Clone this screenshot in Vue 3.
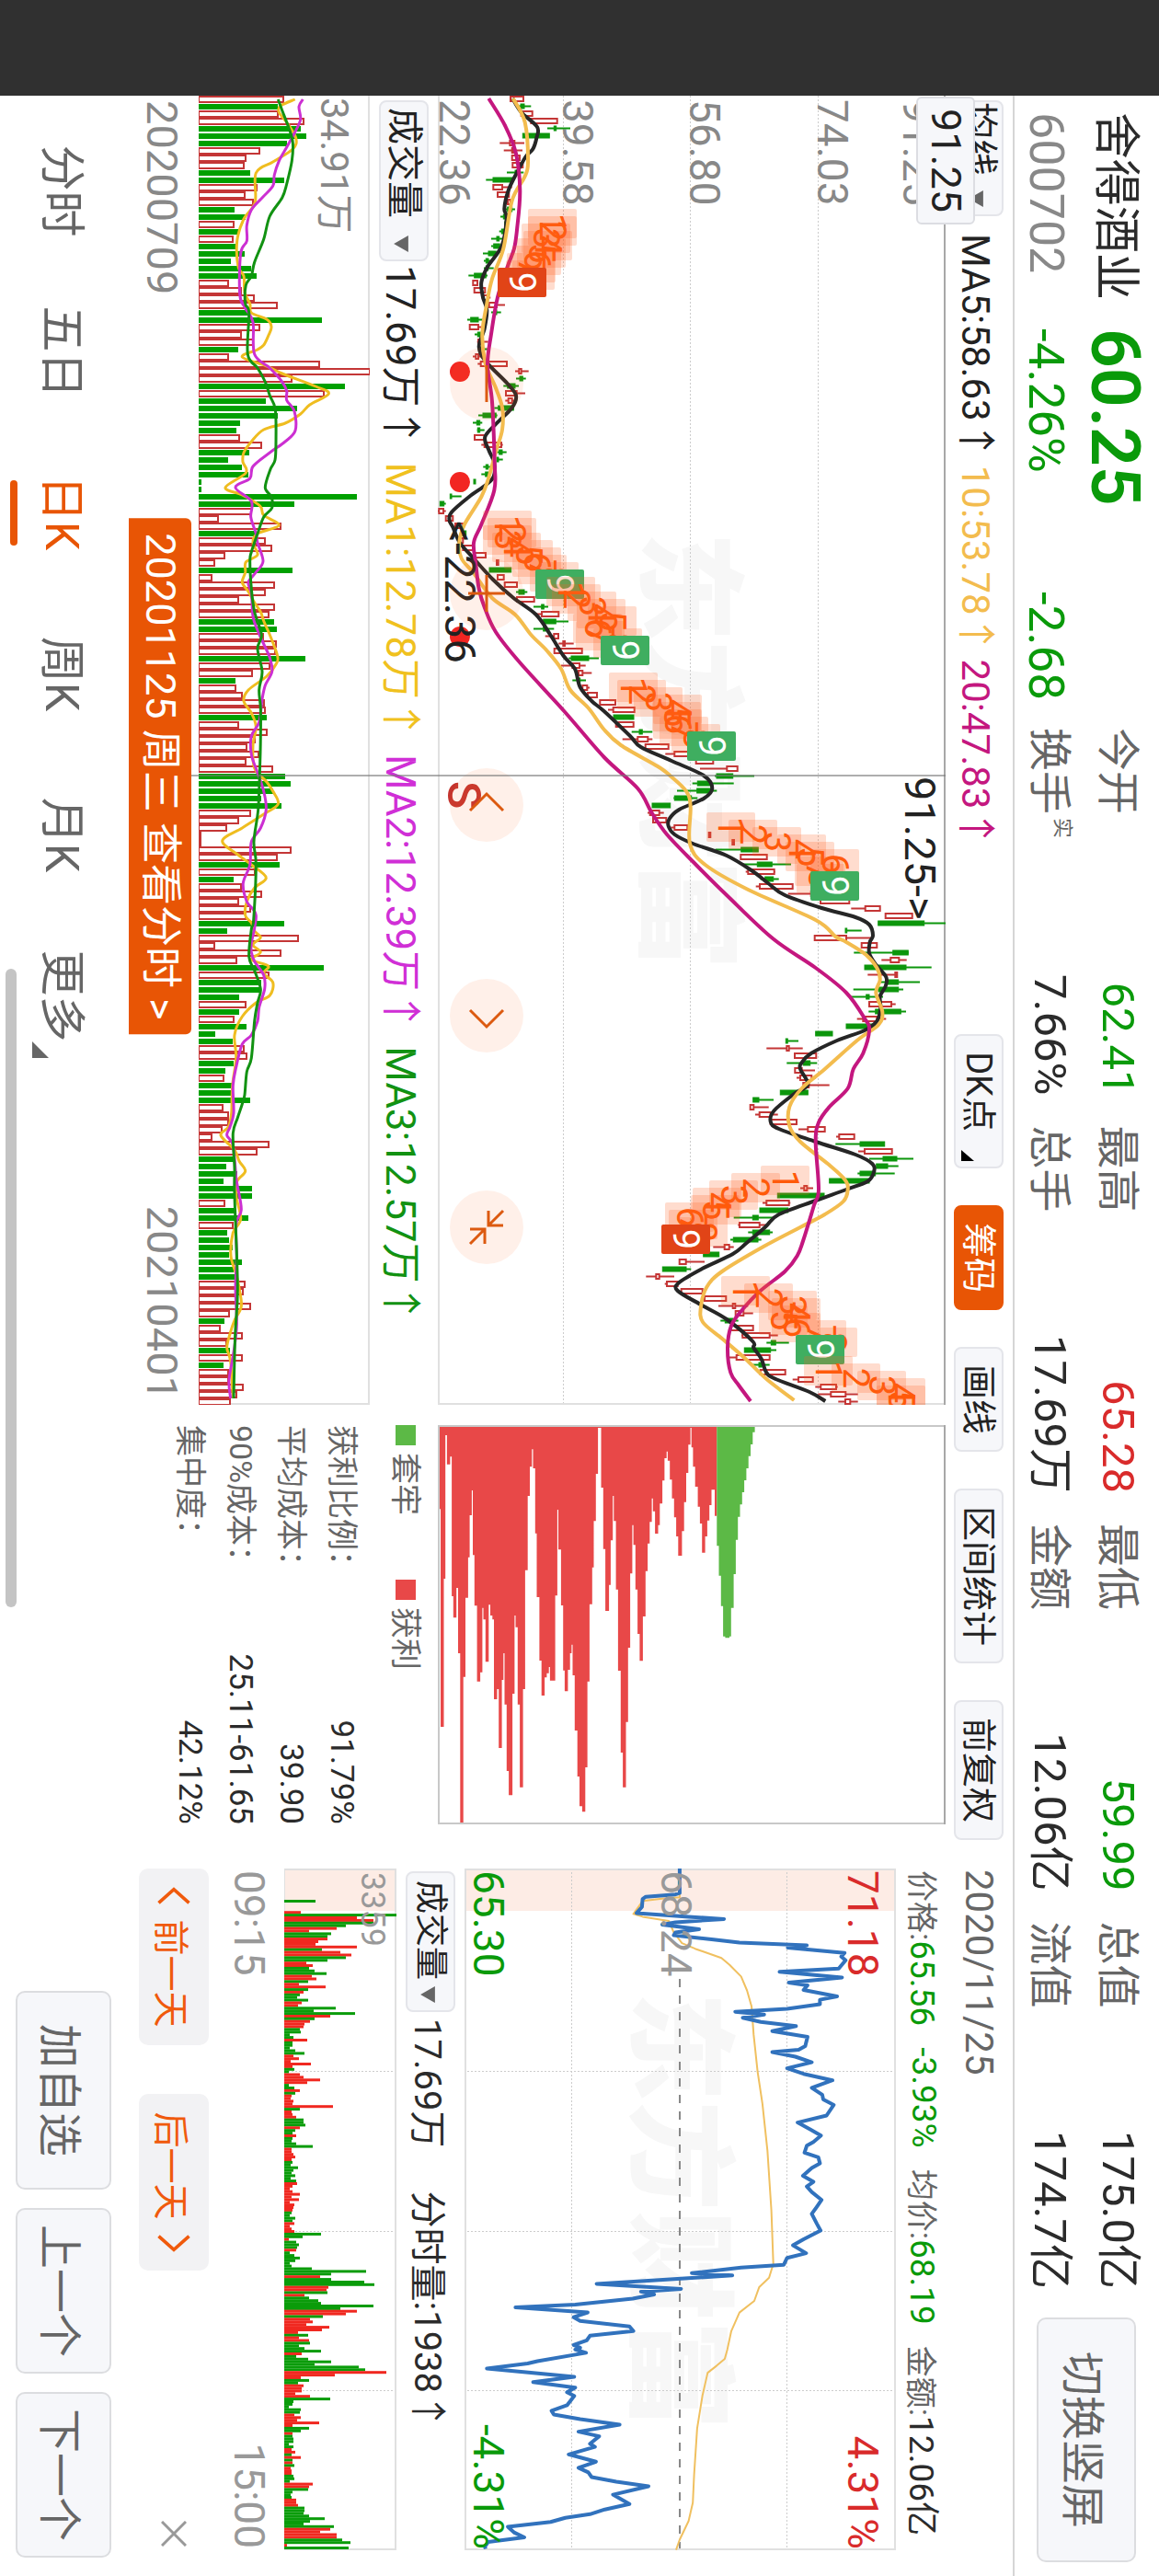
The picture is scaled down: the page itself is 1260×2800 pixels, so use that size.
<template>
  <div class="viewport">
    <div class="screen">
      <div class="notch"></div>
      <div class="app">
        <header class="quote">
          <div class="quote-main">
            <h1 class="name">舍得酒业</h1>
            <strong class="price down">60.25</strong>
            <span class="code">600702</span>
            <span class="change down">-4.26%</span>
            <span class="change down">-2.68</span>
          </div>
          <dl class="quote-stats">
            <div v-for="item in stats" :key="item.label" class="stat">
              <dt>{{ item.label }}<sup v-if="item.sup">{{ item.sup }}</sup></dt>
              <dd :class="item.tone">{{ item.value }}</dd>
            </div>
          </dl>
          <button class="switch-btn" type="button">切换竖屏</button>
        </header>

        <div class="toolbar">
          <div class="pick">
            <select class="ma-select" aria-label="均线">
              <option>均线</option>
            </select>
            <svg class="caret" viewBox="0 0 16 14"><path d="M0 0H16L8 14Z" /></svg>
          </div>
          <p class="ma-values">
            <span class="c-ink">MA5:58.63↑</span>
            <span class="c-amber">10:53.78↑</span>
            <span class="c-magenta">20:47.83↑</span>
          </p>
          <div class="tools">
            <button class="tool tool-dk" type="button">
              DK点
              <svg class="corner" viewBox="0 0 12 14"><path d="M12 0V14H0Z" /></svg>
            </button>
            <button
              v-for="tool in tools"
              :key="tool"
              type="button"
              class="tool"
              :class="{ 'tool-on': tool === activeTool }"
              @click="activeTool = tool"
            >{{ tool }}</button>
          </div>
          <span class="toolbar-date">2020/11/25</span>
        </div>

        <main class="body">
          <!-- 日K -->
          <section class="col-kline">
            <div class="chart-wrap">
              <svg class="chart" viewBox="0 0 1423 552">
                <text class="watermark" x="474" y="322">东方财富</text>
                <g class="grid-dots">
                  <path d="M0 138.5H1423M0 277.5H1423M0 415.5H1423" />
                </g>
                <path class="frame" d="M0 551H1422V0" />
                <path class="frame-top" d="M0 1H1423" />
                <text
                  v-for="axis in priceAxis"
                  :key="axis.text"
                  class="axis-text"
                  x="4"
                  :y="axis.y"
                >{{ axis.text }}</text>
                <g v-for="(c, i) in candles" :key="i" :class="c.up ? 'k-up' : 'k-down'">
                  <path :d="`M${c.x} ${c.high}V${c.top}M${c.x} ${c.bottom}V${c.low}`" />
                  <rect :x="c.x - 2.5" :y="c.top" width="5" :height="c.bottom - c.top" />
                </g>
                <path class="line ink" :d="curve(ma5)" />
                <path class="line amber" :d="curve(ma10)" />
                <path class="line magenta" :d="curve(ma20)" />
                <g v-for="(b, i) in badges" :key="'b' + i">
                  <rect
                    :class="b.kind"
                    :x="b.x - 16"
                    :y="b.y - 26"
                    width="32"
                    height="53"
                    rx="2"
                  />
                  <text
                    class="badge-num"
                    :class="{ 'badge-nine': b.n === 9 }"
                    :x="b.x"
                    :y="b.y + 14"
                  >{{ b.n }}</text>
                </g>
                <circle v-for="x in eventDots" :key="x" class="dot" :cx="x" cy="528" r="11" />
                <text class="mark-text" x="740" y="44">91.25-&gt;</text>
                <text class="mark-text" x="462" y="544">&lt;-22.36</text>
                <text class="sell" x="745" y="541">S</text>
              </svg>
              <button
                v-for="ctl in controls"
                :key="ctl.name"
                type="button"
                class="round"
                :aria-label="ctl.name"
                :style="{ left: ctl.left }"
              >
                <svg viewBox="0 0 80 80"><path :d="ctl.d" /></svg>
              </button>
            </div>

            <div class="sub-head">
              <div class="pick">
                <select class="vol-select" aria-label="日K指标">
                  <option>成交量</option>
                </select>
                <svg class="caret" viewBox="0 0 16 14"><path d="M0 0H16L8 14Z" /></svg>
              </div>
              <p class="vol-values">
                <span class="c-ink">17.69万↑</span>
                <span class="c-gold">MA1:12.78万↑</span>
                <span class="c-violet">MA2:12.39万↑</span>
                <span class="c-green">MA3:12.57万↑</span>
              </p>
            </div>

            <svg class="chart" viewBox="0 0 1423 186">
              <path class="frame" d="M0 1H1422V186" />
              <g v-for="(b, i) in volumes" :key="i" :class="b.up ? 'v-up' : 'v-down'">
                <rect :x="b.x - 3" :y="186 - b.h" width="6" :height="b.h" />
              </g>
              <text class="vol-axis" x="2" y="53">34.91万</text>
              <path class="line gold" :d="curve(volMa1, volScale)" />
              <path class="line violet" :d="curve(volMa2, volScale)" />
              <path class="line green" :d="curve(volMa3, volScale)" />
            </svg>

            <div class="dates">
              <span>20200709</span>
              <a class="date-tag" href="#">20201125 周三 查看分时 &gt;</a>
              <span>20210401</span>
            </div>
            <div class="cross"></div>
            <div class="cross-price">91.25</div>
          </section>

          <!-- 筹码分布 -->
          <section class="col-chips">
            <svg class="chart" viewBox="0 0 434 552">
              <path :d="chipPath(chipProfit, 1131)" fill="#e84848" />
              <path :d="chipPath(chipLocked, 1203)" fill="#5cb946" />
              <path class="frame-chip" d="M1 1V551H433V1" />
              <path class="frame-top" d="M0 1H434" />
            </svg>
            <ul class="legend">
              <li><i class="sq-green"></i>套牢</li>
              <li><i class="sq-red"></i>获利</li>
            </ul>
            <dl class="costs">
              <div v-for="c in costs" :key="c.label">
                <dt>{{ c.label }}：</dt>
                <dd>{{ c.value }}</dd>
              </div>
            </dl>
          </section>

          <!-- 分时 -->
          <section class="col-minute">
            <p class="minute-head">
              <span><em>价格:</em><b class="down">65.56</b></span>
              <b class="down">-3.93%</b>
              <span><em>均价:</em><b class="down">68.19</b></span>
              <span><em>金额:</em><b>12.06亿</b></span>
            </p>
            <svg class="chart" viewBox="0 0 741 469">
              <rect width="46" height="469" fill="#fdece5" />
              <text class="watermark" x="134" y="278">东方财富</text>
              <path class="grid-dots" d="M0 118.5H741M0 352.5H741M220.5 0V469M394.5 0V469M567.5 0V469" />
              <path class="mid-dash" d="M120 235H741" />
              <rect class="frame" x="1" y="1" width="739" height="467" />
              <path class="line avg" :d="minutePath(avgLine)" />
              <path class="line blue" :d="minutePath(priceLine)" />
              <text class="axis-lg up-t" x="2" y="52">71.18</text>
              <text class="axis-lg gray-t" x="2" y="255">68.24</text>
              <text class="axis-lg down-t" x="2" y="459">65.30</text>
              <text class="axis-lg up-t end" x="740" y="52">4.31%</text>
              <text class="axis-lg down-t end" x="740" y="459">-4.31%</text>
            </svg>
            <div class="sub-head sub-head-sm">
              <div class="pick">
                <select class="vol-select-sm" aria-label="分时指标">
                  <option>成交量</option>
                </select>
                <svg class="caret" viewBox="0 0 16 14"><path d="M0 0H16L8 14Z" /></svg>
              </div>
              <span>17.69万</span>
              <span class="minute-vol">分时量:1938↑</span>
            </div>
            <svg class="chart" viewBox="0 0 741 122">
              <rect width="46" height="122" fill="#fdece5" />
              <path class="grid-dots" d="M220.5 0V122M394.5 0V122M567.5 0V122" />
              <rect class="frame" x="1" y="1" width="739" height="121" />
              <rect
                v-for="(b, i) in minuteBars"
                :key="i"
                :x="b.x"
                :y="122 - b.h"
                width="3"
                :height="b.h"
                :fill="b.up ? '#f02820' : '#0a9c0a'"
              />
              <text class="axis-sm" x="4" y="38">3359</text>
            </svg>
            <div class="times"><span>09:15</span><span>15:00</span></div>
            <div class="day-nav">
              <button class="day-btn" type="button">
                <svg viewBox="0 0 24 40"><path d="M20 2L4 20L20 38" /></svg>前一天
              </button>
              <button class="day-btn" type="button">
                后一天<svg viewBox="0 0 24 40"><path d="M4 2L20 20L4 38" /></svg>
              </button>
              <button class="close" type="button" aria-label="关闭">
                <svg viewBox="0 0 28 28"><path d="M1 1L27 27M27 1L1 27" /></svg>
              </button>
            </div>
          </section>
        </main>

        <footer class="bottom">
          <nav class="tabs">
            <button
              v-for="tab in tabs"
              :key="tab"
              type="button"
              class="tab"
              :class="{ 'tab-on': tab === activeTab }"
              @click="activeTab = tab"
            >
              {{ tab }}
              <svg v-if="tab === '更多'" class="tab-corner" viewBox="0 0 18 18"><path d="M18 0V18H0Z" /></svg>
            </button>
          </nav>
          <div class="actions">
            <button class="action action-wide" type="button">加自选</button>
            <button class="action" type="button">上一个</button>
            <button class="action" type="button">下一个</button>
          </div>
          <div class="home-bar"></div>
        </footer>
      </div>
    </div>
  </div>
</template>

<script setup>
import { ref } from 'vue'

const stats = [
  { label: '今开', value: '62.41', tone: 'down' },
  { label: '最高', value: '65.28', tone: 'up' },
  { label: '最低', value: '59.99', tone: 'down' },
  { label: '总值', value: '175.0亿' },
  { label: '换手', sup: '实', value: '7.66%' },
  { label: '总手', value: '17.69万' },
  { label: '金额', value: '12.06亿' },
  { label: '流值', value: '174.7亿' }
]

const tools = ['筹码', '画线', '区间统计', '前复权']
const activeTool = ref('筹码')

const tabs = ['分时', '五日', '日K', '周K', '月K', '更多']
const activeTab = ref('日K')

const costs = [
  { label: '获利比例', value: '91.79%' },
  { label: '平均成本', value: '39.90' },
  { label: '90%成本', value: '25.11-61.65' },
  { label: '集中度', value: '42.12%' }
]

const priceAxis = [
  { text: '91.25', y: 46 },
  { text: '74.03', y: 139 },
  { text: '56.80', y: 278 },
  { text: '39.58', y: 416 },
  { text: '22.36', y: 550 }
]

const eventDots = [300, 420, 588]

const controls = [
  { name: '缩小', x: 313, d: 'M20 40H60' },
  { name: '放大', x: 541, d: 'M20 40H60M40 20V60' },
  { name: '左移', x: 771, d: 'M46 22L28 40L46 58' },
  { name: '右移', x: 1000, d: 'M34 22L52 40L34 58' },
  { name: '退出全屏', x: 1230, d: 'M22 22L38 38M22 38H38V22M58 58L42 42M58 42H42V58' }
].map((c) => ({ ...c, left: `${((c.x - 40) / 1423) * 100}%` }))

// 价格刻度：1px = 3 个单位
const priceY = (v) => Math.round(568 * 10 - (v * 10) / 3) / 10

// 方向 实体低 实体高 [影线低 影线高]
const rawCandles = `r 285 327|g 318 330 305 352|r 320 356|r 352 437|g 427 434 405 480|g 325 412|r 283 298 250 330|r 290 296 263 324
r 290 315|r 292 325|g 300 305 273 328|g 228 290 205 290|r 229 258 229 290|r 243 280|r 276 284|g 275 290 270 300|g 262 270 252 272|g 266 272
g 256 268 248 270|g 240 248 222 260|g 230 250 222 260|g 213 238 195 245|g 205 213 198 220|g 205 212 198 230|g 167 205 148 210|r 163 177
r 167 202|r 198 210 190 220|r 215 240 205 267|g 232 240 222 254|g 155 180 144 200|r 152 180 152 195|g 178 187 168 198|r 180 190 176 212
g 185 190 180 210|r 172 180 162 195|r 188 273 178 273|r 313 320 300 344|g 315 325 303 335|g 275 300 262 312|r 270 305 268 333
r 278 290 268 300|g 245 295 232 297|g 195 238 180 242|g 175 185 162 193|g 178 185 176 200|r 168 200|r 200 255 190 260|g 248 258 240 272
g 240 246 240 260|g 205 212 196 222|g 203 212 190 222|g 165 171|g 120 130|g 88 93 88 125|g 55 68 55 74|r 52 66 45 74|r 74 97|r 105 130
g 125 140|r 120 130|r 130 165|r 165 204|r 240 245|g 216 287|r 243 263|r 266 306|g 312 330 303 340|r 306 362|g 386 394 360 408
r 387 442 365 442|g 392 433 385 474|g 392 400 360 427|r 427 441 398 441|r 457 462 442 491|r 428 518|g 483 540 475 573|r 487 510 450 530
r 507 520 498 550|g 505 512 487 531|r 520 535 520 543|r 537 567|r 577 627|r 620 689 603 689|g 621 687|r 629 686|g 705 715 680 748
r 700 733 650 748|r 725 800|r 820 870 790 870|r 890 946|r 991 1025 903 1025|g 957 1010 951 1080|g 895 935 878 1013|g 893 940 828 958
g 820 875 817 895|g 747 806|r 740 770 732 785|r 750 793|r 820 862 808 862|r 932 937|r 1009 1014|g 1037 1093 953 1093|r 1036 1121
g 1090 1138 1043 1200|r 1060 1145 1052 1148|g 1115 1142 1100 1160|r 1098 1205 1085 1205|r 1265 1300 1190 1300|r 1296 1390
r 1442 1490 1396 1490|r 1508 1595|g 1484 1634 1484 1704|g 1377 1382 1377 1430|r 1277 1380 1277 1460|r 1430 1480|g 1532 1582 1405 1584
r 1525 1552 1495 1577|g 1440 1575 1440 1658|r 1540 1546 1450 1546|g 1510 1550 1490 1620|g 1485 1550 1403 1566|g 1445 1455 1395 1500
r 1455 1527 1455 1541|g 1475 1558 1453 1575|r 1435 1480 1415 1510|g 1380 1475|g 1280 1335|g 1183 1189 1183 1224|r 1186 1193 1120 1238
r 1212 1282|g 1240 1262 1186 1285|r 1213 1235 1213 1278|r 1230 1267 1218 1280|r 1240 1258 1240 1325|g 1165 1255|g 1076 1095 1076 1143
r 1067 1078 1067 1127|r 1097 1133 1083 1157|r 1133 1218|r 1255 1310 1224 1310|r 1357 1406 1347 1406|g 1425 1505 1345 1505
r 1440 1529 1419 1529|g 1500 1545 1455 1599|g 1478 1515 1478 1550|g 1425 1475 1417 1538|g 1325 1455|r 1243 1252 1230 1272|g 1156 1308
r 1120 1193 1107 1198|g 1098 1190|g 1075 1093 1013 1140|r 1032 1097 1027 1120|g 1075 1130 1060 1140|g 1012 1092 1002 1103
r 983 998 946 1013|g 914 965|r 836 857 836 918|g 781 858 781 874|r 760 770 727 819|r 795 830 788 830|r 842 911|r 918 988
r 1010 1018 963 1060|r 1019 1045 1019 1076|g 985 1010 970 1028|r 1002 1076|r 1042 1130 1038 1157|g 1135 1150 1120 1193
g 1048 1133 1048 1152|r 1022 1130 995 1130|g 1095 1105 1072 1130|r 1100 1181|r 1224 1271 1205 1271|r 1297 1347 1279 1352
r 1330 1378 1288 1418|r 1377 1393 1354 1418`

const candles = rawCandles.split(/[|\n]/).map((row, i) => {
  const [dir, lo, hi, wl, wh] = row.split(' ')
  return {
    up: dir === 'r',
    x: 3.5 + i * 8,
    top: priceY(+hi),
    bottom: priceY(+lo),
    high: priceY(+(wh || hi)),
    low: priceY(+(wl || lo))
  }
})

const toPairs = (text) => text.trim().split(/\s+/).map((p) => p.split(',').map(Number))

const ma5 = toPairs(`107,292 122,320 138,372 150,370 162,358 170,335 187,307 207,278 227,265 237,272 267,257 290,210 307,190 323,195
337,208 357,200 377,182 393,205 417,275 430,303 443,290 460,240 475,202 490,215 503,232 518,230 527,205 540,150 557,92 566,86 573,97
590,120 607,165 630,228 650,295 668,368 690,415 713,458 727,495 747,512 762,550 773,590 800,675 812,710 827,810 843,915 857,943
868,915 880,835 890,803 898,800 907,820 917,880 930,990 947,1075 960,1125 973,1180 987,1300 997,1410 1005,1455 1017,1467
1024,1457 1036,1455 1048,1475 1062,1510 1072,1508 1083,1490 1096,1492 1110,1480 1120,1440 1131,1350 1145,1265 1155,1235
1162,1230 1179,1255 1189,1210 1207,1145 1219,1133 1227,1160 1241,1280 1255,1410 1265,1465 1274,1470 1284,1450 1293,1380
1305,1280 1320,1160 1334,1115 1351,1055 1363,1010 1379,910 1394,835 1403,830 1418,905 1434,990 1458,1075 1465,1078 1477,1103
1492,1120 1499,1150 1513,1260 1523,1312`)

const ma10 = toPairs(`107,293 133,332 177,342 193,330 218,290 270,262 303,225 330,208 363,193 395,203 420,235 443,258 467,258 490,238
520,213 540,190 570,135 590,118 607,125 623,165 650,225 668,300 690,352 707,403 727,450 750,480 770,540 793,590 810,645 833,765
843,805 860,858 877,872 917,870 940,920 967,1060 1000,1280 1018,1345 1024,1380 1038,1445 1052,1480 1065,1490 1079,1477
1100,1498 1114,1485 1131,1415 1162,1310 1183,1235 1203,1195 1224,1195 1241,1230 1265,1320 1282,1375 1293,1385 1306,1370
1320,1310 1334,1230 1355,1110 1382,975 1399,925 1420,906 1437,912 1455,975 1475,1045 1499,1120 1522,1210`)

const ma20 = toPairs(`107,214 137,268 167,303 207,316 247,307 270,297 290,275 323,243 363,222 397,210 437,225 503,233 533,232 570,190
590,165 613,172 640,182 660,200 687,237 720,315 773,460 823,590 857,700 883,745 907,795 940,890 973,990 1020,1140 1052,1280
1079,1380 1107,1440 1120,1455 1145,1435 1162,1403 1183,1385 1203,1325 1220,1290 1241,1280 1293,1290 1310,1275 1348,1240
1365,1220 1382,1180 1403,1100 1424,1040 1441,1005 1465,993 1492,1003 1506,1030 1523,1068`)

// 成交量刻度：底部 258 对应 0
const volScale = (v) => 186 - (v - 258) / 3

const rawVolumes = `r533 g517 r515 r601 g590 g610 g545 r455 r410 r405 g425 g537 r448 r408 r435 g375 g410 r373 g390 r368 g378 g407 g363
g428 g447 r355 r395 r438 r512 g420 g660 r455 r396 r435 g386 r355 r650 r815 r560 g735 r665 g477 g580 g515 g392 g382 r390 r462 g423
g355 g400 g420 g267 g267 g773 g570 r428 r322 r524 g440 r473 r495 r343 r310 g563 r300 r505 r473 r386 r503 r485 g503 g513 r467 r510
r508 g605 r488 r432 g378 r378 r400 r470 r475 g480 r388 r480 r440 r415 r452 r410 r497 g540 g558 g500 g463 g527 r425 r387 r347 r265
r265 r557 r512 g522 r440 g373 r395 r463 r388 r425 r410 g538 g352 r583 r308 r525 r380 g665 r485 g463 g463 g390 r412 g390 r373 g413
g312 g370 r405 r415 g372 g345 r338 g365 g368 g425 r335 r353 r353 r333 r300 r485 r448 g376 g349 g385 g340 g431 g431 r343 g378 g421
r368 g351 g357 g369 g358 g398 g372 g380 r408 r402 r385 r427 r356 g342 r326 r398 r349 g360 r398 g338 r355 r355 r403 r380 r360`

const volumes = rawVolumes.split(/\s+/).map((v, i) => ({
  up: v[0] === 'r',
  x: 4 + i * 8,
  h: Math.round((+v.slice(1) - 258) / 3)
}))

const volMa1 = toPairs(`108,572 115,525 122,520 133,545 150,575 162,565 176,500 188,445 220,442 238,405 262,383 290,387 300,405
318,408 330,425 340,430 347,480 355,495 365,485 375,470 380,450 388,400 398,480 406,530 420,640 428,682 440,620 450,590 460,540
467,470 480,430 492,405 502,402 514,412 530,345 538,400 550,458 560,470 571,520 580,450 590,435 603,450 611,412 622,410 633,400
643,420 655,440 665,460 675,470 690,490 713,515 722,510 735,480 750,420 762,405 775,430 790,445 810,435 835,440 850,480 860,500
874,517 885,470 900,400 914,335 930,390 940,430 954,478 965,440 980,415 995,410 1003,430 1012,440 1019,460 1027,435 1035,460
1043,430 1050,485 1058,470 1068,500 1082,490 1090,445 1105,400 1125,375 1150,380 1180,368 1210,365 1225,355 1234,330 1250,375
1262,390 1273,410 1284,383 1300,380 1325,395 1340,370 1365,363 1385,380 1400,390 1420,397 1435,375 1450,360 1465,350 1480,362
1520,370`)

const volMa2 = toPairs(`108,598 116,585 130,590 145,570 160,545 175,520 190,505 202,500 215,465 228,430 245,415 262,415 275,395
320,392 335,410 350,435 385,440 400,490 415,530 425,545 435,545 447,570 468,573 480,540 492,490 507,435 520,425 530,378 545,430
562,428 580,445 590,450 610,468 622,445 633,420 645,430 670,435 685,450 700,470 715,490 730,497 745,475 760,465 785,455 800,430
820,430 840,450 860,470 880,478 900,460 915,430 940,425 960,403 980,415 995,445 1025,430 1035,430 1045,440 1060,470 1075,473
1095,455 1110,450 1125,430 1135,400 1160,380 1180,370 1210,372 1225,360 1234,350 1245,370 1280,380 1290,385 1315,397 1330,380
1365,382 1400,378 1440,382 1470,372 1500,357 1520,362`)

const volMa3 = toPairs(`108,517 120,530 140,553 155,565 175,562 200,545 215,530 235,490 260,470 285,440 300,430 310,412 330,410
340,422 385,418 400,450 415,475 430,490 445,508 480,510 500,507 510,492 530,475 540,495 552,497 562,470 580,450 600,430 610,425
640,430 665,440 690,463 705,450 730,465 750,455 770,460 800,460 840,457 880,452 915,438 940,445 1000,437 1010,430 1040,422
1055,440 1075,460 1090,450 1110,440 1150,430 1165,415 1190,408 1200,400 1215,385 1232,370 1270,375 1300,375 1400,385 1450,377
1520,372`)

// Catmull-Rom 转贝塞尔
const curve = (points, scale = priceY) => {
  const p = points.map(([x, v]) => [x - 104, scale(v)])
  let d = `M${p[0][0]} ${p[0][1].toFixed(1)}`
  for (let i = 0; i < p.length - 1; i++) {
    const a = p[i - 1] || p[i]
    const b = p[i]
    const c = p[i + 1]
    const e = p[i + 2] || c
    const c1 = [b[0] + (c[0] - a[0]) / 6, b[1] + (c[1] - a[1]) / 6]
    const c2 = [c[0] - (e[0] - b[0]) / 6, c[1] - (e[1] - b[1]) / 6]
    d += `C${[...c1, ...c2, ...c].map((n) => n.toFixed(1)).join(' ')}`
  }
  return d
}

// 九转序列
const nineTurns = [
  { x: 139, kind: 'nine-up', ys: [427, 427, 434, 432, 439, 444, 450, 451, 460] },
  { x: 467, kind: 'nine-down', ys: [476, 471, 476, 466, 453, 444, 438, 425, 419] },
  { x: 539, kind: 'nine-down', ys: [407, 401, 384, 374, 362, 378, 375, 356, 348] },
  { x: 643, kind: 'nine-down', ys: [339, 330, 312, 291, 292, 291, 284, 271, 254] },
  { x: 795, kind: 'nine-down', ys: [233, 209, 183, 156, 147, 120, 137, 135, 120] },
  { x: 1179, kind: 'nine-up', ys: [174, 206, 230, 248, 250, 278, 274, 263, 282] },
  { x: 1299, kind: 'nine-down', ys: [217, 192, 166, 162, 176, 162, 134, 122, 136] },
  { x: 1386, kind: '', ys: [127, 97, 69, 48, 48] }
]

const badges = nineTurns.flatMap((s) =>
  s.ys.map((y, i) => ({ x: s.x + i * 8, y, n: i + 1, kind: i === 8 ? s.kind : 'turn' }))
)

const chipProfit = toPairs(`602,192 605,358 608,1068 614,585 617,117 620,212 626,187 629,642 632,712 638,615 641,828 645,1386 651,905
655,647 660,515 663,378 667,297 669,508 672,673 677,920 683,890 687,680 689,718 693,856 699,670 702,705 706,718 709,978 715,945
718,1137 724,915 727,828 729,995 733,1212 737,1291 744,960 748,705 750,743 754,995 758,1265 764,945 768,557 773,315 777,220
781,163 783,225 787,437 790,645 795,852 799,966 805,907 809,893 813,873 815,917 825,640 829,360 831,490 836,672 840,884 843,952
849,882 853,828 856,800 858,900 862,1080 867,1230 871,1327 876,1345 882,1200 886,920 890,668 895,548 898,397 902,243 906,93
912,288 916,488 920,690 927,605 930,460 934,315 936,397 940,620 944,885 949,1152 953,1265 959,1052 963,810 967,568 971,410
973,475 977,620 981,765 985,853 991,708 996,560 1000,470 1004,400 1008,323 1010,365 1014,438 1020,410 1023,340 1028,265
1032,192 1036,170 1038,200 1042,262 1046,323 1050,385 1054,447 1058,510 1065,430 1069,335 1073,240 1077,148 1081,93 1083,157
1086,220 1090,285 1095,350 1099,405 1103,500 1109,447 1113,395 1117,345 1121,295 1127,380`)

const chipLocked = toPairs(`1131,478 1135,575 1139,674 1143,773 1147,778 1155,773 1158,680 1163,570 1167,458 1171,383 1175,343
1179,303 1183,264 1187,225 1191,185 1195,147 1199,107`)

const chipPath = (steps, end) => {
  const y = (v) => (898 - v / 1.742).toFixed(1)
  let d = `M1 ${y(steps[0][0])}`
  steps.forEach(([v, len], i) => {
    const next = i < steps.length - 1 ? steps[i + 1][0] : end
    d += `H${((len - 84) / 3).toFixed(1)}V${y(next)}`
  })
  return `${d}H1Z`
}

const priceLine = toPairs(`42,753 95,753 98,740 103,650 108,640 125,638 138,622 146,780 151,888 158,740 163,700 173,812 180,740
186,735 195,850 202,935 208,1140 213,1082 224,1255 232,1245 240,1258 258,1237 265,1057 277,1247 288,1085 294,1142 304,1130
318,1232 325,1180 335,1180 345,1080 351,922 357,1010 364,945 373,1000 382,1107 393,1035 405,1142 425,1135 433,1115 438,1035
448,1105 460,1155 473,1080 485,1130 499,1218 515,1155 530,1187 540,1190 552,1222 575,1200 590,1112 605,1150 618,1183 632,1160
640,1140 655,1133 665,1175 678,1180 688,1155 705,1128 718,1160 728,1140 740,1155 757,1185 772,1170 787,1155 808,1170 823,1182
842,1130 855,1098 872,1138 882,1080 897,1070 903,940 915,790 920,913 930,680 938,500 949,757 955,635 961,675 970,610 983,435
989,253 1000,473 1010,430 1018,450 1030,600 1040,612 1050,480 1060,470 1070,430 1076,450 1080,435 1087,468 1105,320 1110,290
1121,166 1130,300 1139,432 1150,307 1162,435 1172,410 1180,432 1200,410 1212,363 1220,370 1230,450 1242,570 1257,445 1267,508
1283,480 1290,495 1306,415 1322,498 1335,445 1345,475 1355,485 1365,560 1375,658 1393,550 1413,600 1425,525 1435,480 1443,405
1452,360 1462,230 1475,250 1485,280 1495,170 1505,160 1510,162`)

const avgLine = toPairs(`42,753 104,753 107,700 112,640 140,612 146,640 155,720 180,735 203,760 215,800 235,880 250,905 275,940
305,958 340,972 400,978 480,990 550,1005 650,1020 780,1032 895,1038 925,1025 945,995 975,980 1000,935 1040,910 1080,898 1100,890
1115,865 1130,838 1180,822 1250,806 1350,797 1410,793 1450,780 1490,753 1512,742`)

const minutePath = (points) =>
  'M' + points.map(([t, v]) => `${((t - 42) / 1.985).toFixed(1)} ${(504 - v / 2.8).toFixed(1)}`).join('L')

const rawMinute = `110g641 139g903 145r775 151r828 157g828 163g740 168r710 174r620 180g690 186g678 191r680 197r650 203r640 208r774
213g660 219r722 225r758 231g740 237g680 242r610 248r630 254g620 260g638 265g675 271r628 277r642 283g616 294r673 300g615 306r600
322g615 328r595 340g705 345g635 351g768 357r687 363g636 369r622 375r605 386g588 392g593 409r614 438g605 450r585 461r624 484r588
489r602 495r655 501r612 518r590 552r697 558g588 575r578 580g600 586g602 592g608 598r590 615r577 638g632 667r563 685g583 702g575
719r580 742r588 754r585 805r570 829g658 834g597 845g577 851g587 857g580 863r576 880g588 903g627 909g806 914g690 920r655 926g690
932g800 938g833 944r683 949r675 955g680 961r605 967g618 972g650 978g658 983g828 989g720 995r774 1001r740 1007g665 1012r623
1018r632 1024r610 1030r684 1036r662 1047g615 1058r620 1064g622 1082g659 1087r595 1099g617 1105g692 1110g637 1116g780 1121g803
1127r872 1133r702 1145g618 1156r602 1162r594 1179r621 1185g687 1208g593 1213g590 1225r592 1231r580 1237r651 1248g618 1254g593
1311r593 1328g571 1369r630 1375r620 1380g617 1403r578 1415r582 1420g604 1426g604 1432g600 1437g620 1443g671 1449g621 1455g600
1461g699 1466r687 1472r655 1478r710 1484r708 1490g727 1496g753 1502r548 1508g748`

const spikes = {}
rawMinute.split(/\s+/).forEach((s) => {
  const [, t, dir, v] = s.match(/^(\d+)([rg])(\d+)$/)
  spikes[Math.round((t - 42) / 5.75)] = { up: dir === 'r', h: Math.round((v - 538) / 3) }
})

const minuteBars = []
for (let i = 16; i < 256; i++) {
  const busy = i < 60 || (i > 150 && i < 200) || i > 238
  const wave = (Math.sin(i * 2.7) + Math.sin(i * 1.3) + 2) / 4
  minuteBars.push({
    x: Math.round(i * 28.9) / 10,
    up: Math.sin(i * 0.9) + Math.sin(i * 0.37) > 0.1,
    h: Math.round((busy ? 12 : 5) + wave * (busy ? 10 : 8)),
    ...spikes[i]
  })
}
minuteBars.push({ x: 34, up: false, h: 34 })
</script>

<style>
body {
  margin: 0;
  background: #fff;
}
</style>

<style scoped>
.viewport {
  position: relative;
  width: 100%;
  height: 100vh;
  overflow: hidden;
  background: #fff;
}

/* 横屏：整屏顺时针旋转 */
.screen {
  display: flex;
  width: 100vh;
  height: 100vw;
  transform: rotate(90deg) translateY(-100%);
  transform-origin: 0 0;
  color: #2b2b2b;
  font-family: Roboto, "Noto Sans CJK SC", sans-serif;
  font-size: 42px;
}

.screen * {
  box-sizing: border-box;
}

h1,
p,
dl,
dd,
ul {
  margin: 0;
  padding: 0;
}

button,
select {
  font: inherit;
  color: inherit;
  margin: 0;
  padding: 0;
  cursor: pointer;
}

.notch {
  flex: 0 0 104px;
  background: #303030;
}

.app {
  flex: 1;
  min-width: 0;
  display: flex;
  flex-direction: column;
}

.up { color: #d92b2b; }
.down { color: #0a9a0a; }
.c-ink { color: #222; }
.c-amber { color: #f3bc4e; }
.c-magenta { color: #c4177f; }
.c-gold { color: #f0c11e; }
.c-violet { color: #d02fd6; }
.c-green { color: #129212; }

/* 顶部行情 */
.quote {
  display: flex;
  align-items: flex-start;
  height: 159px;
  padding: 8px 15px 0 18px;
  border-bottom: 2px solid #d6d6d6;
}

.quote-main {
  flex: 0 0 669px;
  display: grid;
  grid-template-columns: 235px 286px auto;
  grid-template-rows: 78px 74px;
  align-items: center;
  line-height: 60px;
}

.name {
  font-size: 51px;
  font-weight: 400;
}

.price {
  grid-column: 2 / 4;
  font-size: 75px;
  font-weight: 600;
}

.code {
  font-size: 52px;
  color: #888;
}

.change {
  font-size: 53px;
}

.quote-stats {
  flex: 1;
  display: grid;
  grid-template-columns: repeat(4, 1fr);
  grid-template-rows: 74px 74px;
  column-gap: 33px;
  align-items: center;
  line-height: 60px;
}

.stat {
  display: flex;
  justify-content: space-between;
}

.stat dt {
  display: flex;
  font-size: 47px;
  color: #666;
}

.stat sup {
  margin-left: 4px;
  font-size: 22px;
  line-height: 32px;
}

.stat dd {
  font-size: 49px;
}

.switch-btn {
  flex: 0 0 266px;
  height: 108px;
  margin: 17px 0 0 31px;
  border: 2px solid #dcdde0;
  border-radius: 10px;
  background: #f6f7fa;
  color: #666;
  font-size: 48px;
}

/* 工具栏 */
.toolbar {
  display: flex;
  align-items: center;
  height: 73px;
  padding: 0 28px 0 5px;
}

.pick {
  position: relative;
  flex: none;
}

.pick select {
  appearance: none;
  height: 54px;
  border: 2px solid #e4e5ea;
  border-radius: 8px;
  background: #f6f7fa;
  color: #222;
  font-size: 40px;
  line-height: 50px;
}

.ma-select {
  width: 126px;
}

.vol-select {
  width: 175px;
  padding-left: 6px;
}

.pick .vol-select-sm {
  width: 153px;
  padding-left: 8px;
  font-size: 36px;
}

.caret {
  position: absolute;
  right: 10px;
  top: 22px;
  width: 18px;
  height: 16px;
  fill: #666;
  pointer-events: none;
}

.ma-values {
  display: flex;
  gap: 6px;
  margin-left: 19px;
  white-space: nowrap;
}

.tools {
  display: flex;
  gap: 40px;
  margin-left: auto;
}

.tool {
  position: relative;
  height: 54px;
  padding: 0 17px;
  border: 2px solid #e4e5ea;
  border-radius: 8px;
  background: #f6f7fa;
  color: #222;
  font-size: 38px;
  line-height: 50px;
  white-space: nowrap;
}

.tool-dk {
  padding-right: 38px;
}

.corner {
  position: absolute;
  right: 6px;
  bottom: 6px;
  width: 12px;
  height: 14px;
}

.tool-on {
  border-color: #e85505;
  background: #e85505;
  color: #fff;
}

.toolbar-date {
  flex: 0 0 772px;
  padding-left: 32px;
  color: #666;
}

/* 主体 */
.body {
  display: grid;
  grid-template-columns: 1423fr 456fr 789fr;
  align-items: start;
  padding-right: 28px;
}

.chart {
  display: block;
  width: 100%;
  height: auto;
}

.col-kline {
  position: relative;
  min-width: 0;
}

.col-chips {
  min-width: 0;
  padding-left: 22px;
}

.col-minute {
  min-width: 0;
  padding-left: 48px;
}

.chart-wrap {
  position: relative;
}

.watermark {
  font-size: 119px;
  font-weight: 900;
  fill: #f7f7f7;
}

.grid-dots {
  fill: none;
  stroke: #ccc;
  stroke-width: 1;
  stroke-dasharray: 2 2;
}

.frame {
  fill: none;
  stroke: #e0e0e0;
  stroke-width: 2;
}

.frame-top {
  stroke: #a8a8a8;
  stroke-width: 2;
}

.frame-chip {
  fill: none;
  stroke: #c8c8c8;
  stroke-width: 2;
}

.axis-text {
  font-size: 46px;
  fill: #888;
}

.vol-axis {
  font-size: 42px;
  fill: #888;
}

.k-up path,
.k-up rect {
  fill: #fff;
  stroke: #c43636;
  stroke-width: 2;
}

.k-down path,
.k-down rect {
  fill: #0c960c;
  stroke: #0c960c;
  stroke-width: 2;
}

.k-down rect {
  stroke-width: 1;
}

.v-up rect {
  fill: #fff;
  stroke: #c43636;
  stroke-width: 2;
}

.v-down rect {
  fill: #00a000;
}

.line {
  fill: none;
  stroke-width: 3;
  stroke-linejoin: round;
}

.ink { stroke: #262626; }
.amber { stroke: #f3bc4e; }
.magenta { stroke: #c4177f; }
.gold { stroke: #efbd20; }
.violet { stroke: #cc2fd2; }
.green { stroke: #129212; }

.ink,
.amber,
.magenta {
  stroke-width: 4;
}

.blue {
  stroke: #3172bd;
  stroke-width: 4;
}

.avg {
  stroke: #f0c060;
  stroke-width: 2;
}

.turn { fill: rgba(255, 96, 30, 0.22); }
.nine-up { fill: #e14417; }
.nine-down { fill: #3fae60; }

.badge-num {
  font-size: 40px;
  text-anchor: middle;
  fill: #ff5a0a;
}

.badge-nine {
  fill: #fff;
}

.dot {
  fill: #f22622;
}

.mark-text {
  font-size: 47px;
  fill: #222;
}

.sell {
  font-size: 50px;
  font-weight: 500;
  fill: #c4342e;
}

.round {
  position: absolute;
  bottom: 13px;
  width: 80px;
  height: 80px;
  border: 0;
  border-radius: 50%;
  background: rgba(255, 110, 40, 0.1);
}

.round svg {
  display: block;
  fill: none;
  stroke: #dc5a10;
  stroke-width: 3;
}

.sub-head {
  display: flex;
  align-items: center;
  height: 74px;
  padding-left: 5px;
  white-space: nowrap;
}

.sub-head-sm {
  padding-left: 3px;
  gap: 7px;
  font-size: 40px;
}

.minute-vol {
  margin-left: 40px;
}

.vol-values {
  display: flex;
  gap: 16px;
  margin-left: 4px;
  font-size: 44px;
}

.dates {
  position: relative;
  display: flex;
  justify-content: space-between;
  height: 76px;
  padding: 10px 5px 0;
  font-size: 47px;
  line-height: 60px;
  color: #888;
}

.date-tag {
  position: absolute;
  left: 52%;
  top: 8px;
  transform: translateX(-50%);
  padding: 0 16px;
  border-radius: 6px 6px 0 0;
  background: #e85505;
  color: #fff;
  font-size: 45px;
  line-height: 68px;
  text-decoration: none;
  white-space: nowrap;
}

.cross {
  position: absolute;
  left: 52%;
  top: 0;
  bottom: 68px;
  width: 2px;
  margin-left: -2px;
  background: rgba(120, 120, 120, 0.6);
}

.cross-price {
  position: absolute;
  left: 1px;
  top: -32px;
  width: 139px;
  height: 64px;
  border: 2px solid #dcdde2;
  border-radius: 6px;
  background: #f6f7fa;
  color: #222;
  font-size: 45px;
  line-height: 60px;
  text-align: center;
}

/* 筹码 */
.legend {
  display: flex;
  gap: 70px;
  padding-top: 15px;
  list-style: none;
  color: #666;
  font-size: 34px;
  line-height: 40px;
}

.legend li {
  display: flex;
  align-items: center;
  gap: 8px;
}

.legend i {
  width: 22px;
  height: 22px;
}

.sq-green { background: #5cb946; }
.sq-red { background: #e84848; }

.costs {
  padding-top: 22px;
  line-height: 55px;
}

.costs div {
  display: flex;
  justify-content: space-between;
}

.costs dt {
  font-size: 34px;
  color: #666;
}

.costs dd {
  font-size: 35px;
}

/* 分时 */
.minute-head {
  display: flex;
  align-items: center;
  gap: 23px;
  height: 54px;
  padding: 0 0 8px 2px;
  font-size: 37px;
  white-space: nowrap;
}

.minute-head em {
  color: #666;
  font-size: 34px;
  font-style: normal;
}

.minute-head b {
  font-weight: 400;
}

.mid-dash {
  stroke: #888;
  stroke-width: 2;
  stroke-dasharray: 9 9;
}

.axis-lg { font-size: 46px; }
.axis-sm { font-size: 36px; fill: #999; }
.up-t { fill: #d92b2b; }
.down-t { fill: #0a9a0a; }
.gray-t { fill: #999; }
.end { text-anchor: end; }

.times {
  display: flex;
  justify-content: space-between;
  padding: 8px 2px 14px;
  color: #999;
  font-size: 46px;
  line-height: 60px;
}

.day-nav {
  display: flex;
  align-items: center;
}

.day-btn {
  display: flex;
  align-items: center;
  justify-content: center;
  gap: 14px;
  width: 192px;
  height: 76px;
  margin-right: 53px;
  border: 0;
  border-radius: 10px;
  background: #f2f2f4;
  color: #f05a0c;
  font-size: 39px;
}

.day-btn svg {
  width: 22px;
  height: 38px;
  fill: none;
  stroke: currentColor;
  stroke-width: 4;
}

.close {
  margin-left: auto;
  padding: 4px;
  border: 0;
  background: none;
}

.close svg {
  display: block;
  width: 28px;
  height: 28px;
  fill: none;
  stroke: #999;
  stroke-width: 3;
}

/* 底部 */
.bottom {
  position: relative;
  flex: 1;
  display: flex;
  justify-content: space-between;
  padding: 19px 20px 0 16px;
}

.tabs {
  display: flex;
}

.tab {
  position: relative;
  width: 175px;
  height: 110px;
  padding-bottom: 12px;
  border: 0;
  background: none;
  color: #666;
  font-size: 50px;
}

.tab-on {
  color: #e85505;
}

.tab-on::after {
  content: "";
  position: absolute;
  left: 52px;
  right: 52px;
  bottom: 0;
  height: 8px;
  border-radius: 4px;
  background: #e85505;
}

.tab-corner {
  position: absolute;
  right: 20px;
  bottom: 24px;
  width: 18px;
  height: 18px;
  fill: #666;
}

.actions {
  display: flex;
  gap: 20px;
}

.action {
  width: 180px;
  height: 104px;
  border: 2px solid #dcdde0;
  border-radius: 10px;
  background: #f6f7fa;
  color: #666;
  font-size: 48px;
}

.action-wide {
  width: 216px;
}

.home-bar {
  position: absolute;
  left: 949px;
  bottom: 6px;
  width: 694px;
  height: 12px;
  border-radius: 6px;
  background: #c4c4c4;
}
</style>
